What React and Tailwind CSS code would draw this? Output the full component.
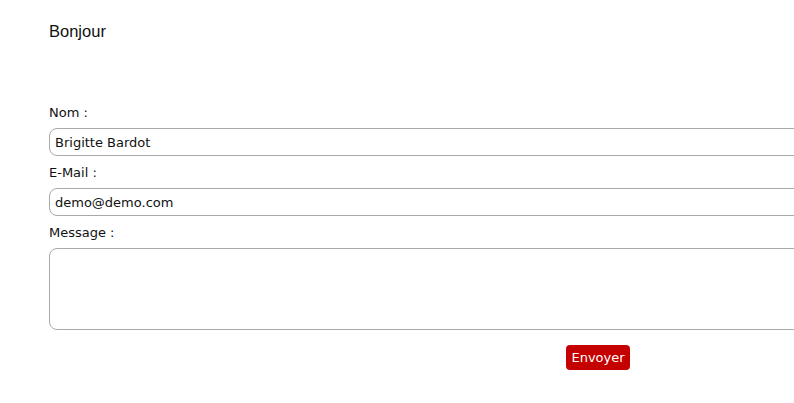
import React from 'react';

export default function App() {
  return (
    <div className="w-[794px] h-[403px] overflow-hidden bg-white">
      <div className="pl-[49px] pt-[22px] w-[1147px]">
        {/* Greeting */}
        <p className="text-[16.5px] leading-[19px] text-[#111] font-['Liberation_Sans',Arial,sans-serif]">
          Bonjour
        </p>

        {/* Contact form */}
        <form className="mt-[64px] flex flex-col font-['DejaVu_Sans',Verdana,sans-serif] text-[13px] text-[#111]">
          <label className="leading-[16px]">Nom :</label>
          <input
            type="text"
            defaultValue="Brigitte Bardot"
            className="mt-[7px] h-[28px] w-full rounded-[8px] border border-[#a9a9a9] px-[5px] text-[13px] outline-none"
          />
          <label className="mt-[9px] leading-[16px]">E-Mail :</label>
          <input
            type="text"
            defaultValue="demo@demo.com"
            className="mt-[7px] h-[28px] w-full rounded-[8px] border border-[#a9a9a9] px-[5px] text-[13px] outline-none"
          />
          <label className="mt-[9px] leading-[16px]">Message :</label>
          <textarea
            className="mt-[7px] h-[82px] w-full resize-none rounded-[8px] border border-[#a9a9a9] px-[5px] text-[13px] outline-none"
          />
          <div className="mt-[15px] flex justify-center">
            <button
              type="button"
              className="h-[25px] rounded-[4px] bg-[#c40000] px-[5px] text-[13px] text-white"
            >
              Envoyer
            </button>
          </div>
        </form>
      </div>
    </div>
  );
}
